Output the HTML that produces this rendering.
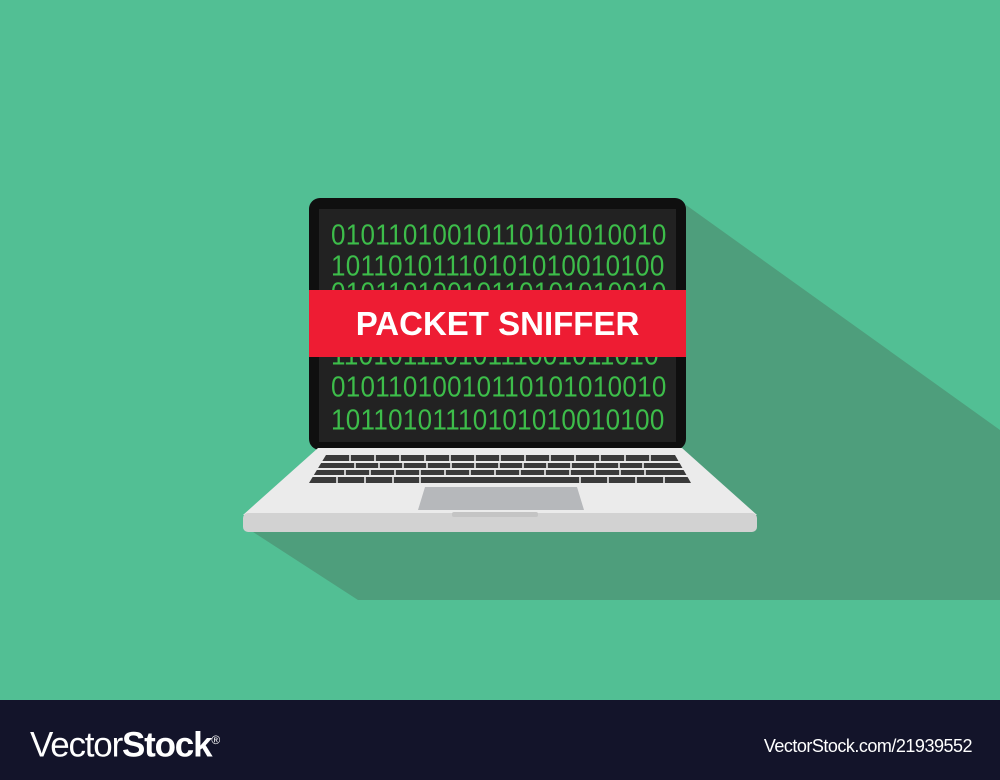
<!DOCTYPE html>
<html><head><style>
body{margin:0;width:1000px;height:780px;overflow:hidden;background:#52bf94;position:relative;font-family:"Liberation Sans",sans-serif}
.row{position:absolute;left:12px;font-family:"Liberation Sans",sans-serif;font-size:26px;color:#3dbd4a;letter-spacing:0.3px;transform:scaleY(1.12);transform-origin:0 0;line-height:1;white-space:nowrap}
</style></head><body>
<svg width="1000" height="700" style="position:absolute;left:0;top:0">
<polygon points="686,205 1000,430 1000,600 358,600 250,530 680,440" fill="#4e9e7c"/>
<rect x="309" y="198" width="377" height="252" rx="11" fill="#0f0f0f"/>
<rect x="319" y="209" width="357" height="233" fill="#222"/>
</svg>
<div style="position:absolute;left:319px;top:209px;width:357px;height:233px;overflow:hidden">
<div class="row" style="top:11px">01011010010110101010010</div>
<div class="row" style="top:42px">10110101110101010010100</div>
<div class="row" style="top:69px">01011010010110101010010</div>
<div class="row" style="top:131px">11010111010111001011010</div>
<div class="row" style="top:163px">01011010010110101010010</div>
<div class="row" style="top:196px">10110101110101010010100</div>
</div>
<div style="position:absolute;left:309px;top:290px;width:377px;height:67px;background:#ee1c33;color:#fff;font-weight:bold;font-size:33px;line-height:67px;text-align:center">PACKET SNIFFER</div>
<svg width="1000" height="700" style="position:absolute;left:0;top:0">
<polygon points="318,448 682,448 757,515 243,515" fill="#ebebeb"/>
<rect x="243" y="513" width="514" height="19" rx="5" fill="#d2d2d2"/>
<rect x="452" y="512" width="86" height="5" rx="2" fill="#c4c4c4"/>
<polygon points="425,487 577,487 584,510 418,510" fill="#b6b8bb"/>
<polygon points="326,455 675,455 691,483 309,483" fill="#3a3a3a"/>
<g stroke="#ebebeb" stroke-width="2">
<line x1="316" y1="462" x2="684" y2="462"/><line x1="313" y1="469" x2="687" y2="469"/><line x1="311" y1="476" x2="689" y2="476"/>
</g>
<g stroke="#ebebeb" stroke-width="1.6">
<path d="M350 455v7M375 455v7M400 455v7M425 455v7M450 455v7M475 455v7M500 455v7M525 455v7M550 455v7M575 455v7M600 455v7M625 455v7M650 455v7"/>
<path d="M355 462v7M379 462v7M403 462v7M427 462v7M451 462v7M475 462v7M499 462v7M523 462v7M547 462v7M571 462v7M595 462v7M619 462v7M643 462v7"/>
<path d="M345 469v7M370 469v7M395 469v7M420 469v7M445 469v7M470 469v7M495 469v7M520 469v7M545 469v7M570 469v7M595 469v7M620 469v7M645 469v7"/>
<path d="M337 476v7M365 476v7M393 476v7M420 476v7M580 476v7M608 476v7M636 476v7M664 476v7"/>
</g>
</svg>
<div style="position:absolute;left:0;top:700px;width:1000px;height:80px;background:#13142a;color:#fff">
<div style="position:absolute;left:30px;top:20px;font-size:35px;letter-spacing:-1.2px;line-height:40px"><span style="font-weight:300">Vector</span><b>Stock</b><sup style="font-size:12px">®</sup></div>
<div style="position:absolute;right:28px;top:35px;font-size:18px;letter-spacing:-0.5px;line-height:22px">VectorStock.com/21939552</div>
</div>
</body></html>
